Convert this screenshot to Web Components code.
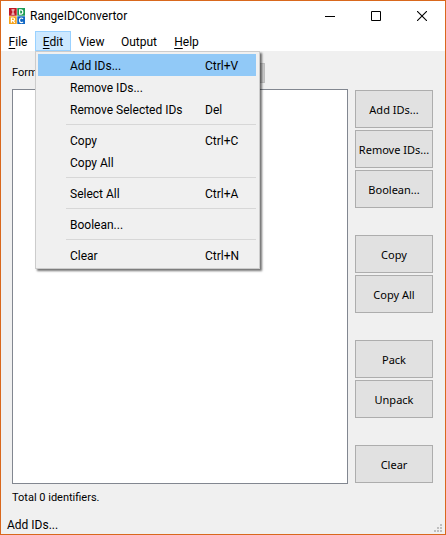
<!DOCTYPE html>
<html lang="en">
<head>
<meta charset="utf-8">
<title>RangeIDConvertor</title>
<style>
html, body { height: 100%; margin: 0; }
body { font-family: Roboto, "Noto Sans", sans-serif; font-size: 12px; line-height: 16px; color: #000; }
</style>
</head>
<body>
<app-window>
  <title-bar slot="title">RangeIDConvertor</title-bar>
  <menu-bar slot="menu">
    <menu-entry key="F">File</menu-entry>
    <menu-entry key="E" open>Edit
      <menu-popup slot="popup">
        <menu-item shortcut="Ctrl+V" active>Add IDs...</menu-item>
        <menu-item>Remove IDs...</menu-item>
        <menu-item shortcut="Del">Remove Selected IDs</menu-item>
        <menu-line></menu-line>
        <menu-item shortcut="Ctrl+C">Copy</menu-item>
        <menu-item>Copy All</menu-item>
        <menu-line></menu-line>
        <menu-item shortcut="Ctrl+A">Select All</menu-item>
        <menu-line></menu-line>
        <menu-item>Boolean...</menu-item>
        <menu-line></menu-line>
        <menu-item shortcut="Ctrl+N">Clear</menu-item>
      </menu-popup>
    </menu-entry>
    <menu-entry>View</menu-entry>
    <menu-entry>Output</menu-entry>
    <menu-entry key="H">Help</menu-entry>
  </menu-bar>
  <id-editor>
    <button-group slot="actions">
      <push-button>Add IDs...</push-button>
      <push-button>Remove IDs...</push-button>
      <push-button>Boolean...</push-button>
    </button-group>
    <button-group slot="actions">
      <push-button>Copy</push-button>
      <push-button>Copy All</push-button>
    </button-group>
    <button-group slot="actions">
      <push-button>Pack</push-button>
      <push-button>Unpack</push-button>
    </button-group>
    <button-group slot="actions">
      <push-button>Clear</push-button>
    </button-group>
    <span slot="total">Total 0 identifiers.</span>
  </id-editor>
  <status-bar slot="status">Add IDs...</status-bar>
</app-window>
<script>
function component(name, render) {
  customElements.define(name, class extends HTMLElement {
    constructor() {
      super();
      this.attachShadow({ mode: "open" });
    }
    connectedCallback() {
      this.shadowRoot.innerHTML = render(this);
    }
  });
}

component("app-window", () => `
  <style>
    :host { display: flex; flex-direction: column; box-sizing: border-box; min-height: 100vh;
            border: 1px solid #d9681d; background: #f0f0f0; }
    main { flex: 1; display: flex; flex-direction: column; }
  </style>
  <slot name="title"></slot>
  <slot name="menu"></slot>
  <main><slot></slot></main>
  <slot name="status"></slot>`);

component("title-bar", () => `
  <style>
    :host { display: flex; align-items: center; height: 30px; padding-left: 8px; background: #fff; }
    h1 { flex: 1; margin: 0 0 0 5px; font: inherit; }
    button { width: 46px; height: 30px; padding: 0; border: 0; background: none; }
    svg { display: block; margin: 0 auto; }
    .logo { margin: 0; }
  </style>
  <svg class="logo" width="16" height="16" viewBox="0 0 16 16" aria-hidden="true">
    <rect width="8" height="8" fill="#c01722"/>
    <rect x="8" width="8" height="8" fill="#1d9c55"/>
    <rect y="8" width="8" height="8" fill="#f6a31c"/>
    <rect x="8" y="8" width="8" height="8" fill="#1268c4"/>
    <path d="M8 0v16M0 8h16" stroke="#fff" stroke-opacity=".55"/>
    <g fill="none" stroke="#fff" stroke-width="1.2">
      <path d="M2.5 1.8h3M4 1.8v4.4M2.5 6.2h3" stroke-opacity=".8"/>
      <path d="M10.6 1.8h1.4q1.8 0 1.8 2.2t-1.8 2.2h-1.4z"/>
      <path d="M2.4 14.8V10h1.8q1.4 0 1.4 1.3t-1.4 1.3H2.4M4 12.6l1.8 2.2"/>
      <path d="M14 10.8q-.6-.8-1.6-.8-1.9 0-1.9 2.3t1.9 2.4q1 0 1.6-.8"/>
    </g>
  </svg>
  <h1><slot></slot></h1>
  <button aria-label="Minimize"><svg width="10" height="10"><path d="M0 5.5h10" stroke="#000"/></svg></button>
  <button aria-label="Maximize"><svg width="10" height="10"><path d="M.5 .5h9v9h-9z" fill="none" stroke="#000"/></svg></button>
  <button aria-label="Close"><svg width="10" height="10"><path d="M0 0l10 10M10 0L0 10" stroke="#000" stroke-width="1.1"/></svg></button>`);

component("menu-bar", () => `
  <style>
    :host { display: block; background: #fff; }
    nav { display: grid; grid-template-columns: 34px 36px 41px 54px 41px; height: 20px; }
  </style>
  <nav aria-label="Menu"><slot></slot></nav>`);

component("menu-entry", el => {
  const label = el.firstChild.textContent.trim();
  const text = el.getAttribute("key") ? `<u>${label[0]}</u>${label.slice(1)}` : label;
  return `
  <style>
    :host { display: block; position: relative; }
    button { display: block; width: 100%; height: 20px; padding: 2px 0 0; border: 1px solid transparent;
             background: none; font: inherit; color: inherit; white-space: nowrap; }
    :host([open]) button { background: #cce8ff; border-color: #99d1ff; }
    u { text-underline-offset: 2px; text-decoration-skip-ink: none; }
  </style>
  <button aria-haspopup="menu" aria-expanded="${el.hasAttribute("open")}">${text}</button>
  <slot name="popup"></slot>`;
});

component("menu-popup", () => `
  <style>
    :host { position: absolute; z-index: 1; top: 100%; left: 0; box-sizing: border-box; width: 225px; padding: 2px;
            border: 1px solid #ccc; background: #f0f0f0; box-shadow: 2px 2px 2px rgba(0,0,0,.55); }
    div { padding-right: 1px; }
  </style>
  <div role="menu"><slot></slot></div>`);

component("menu-item", el => `
  <style>
    :host { display: block; }
    button { display: grid; grid-template-columns: 1fr 51px; align-items: center; width: 100%; height: 22px;
             padding: 2px 0 0 32px; border: 0; background: none; font: inherit; color: inherit;
             text-align: left; white-space: nowrap; }
    :host([active]) button { background: #91c9f7; }
  </style>
  <button role="menuitem"><span><slot></slot></span><span>${el.getAttribute("shortcut") || ""}</span></button>`);

component("menu-line", () => `
  <style>
    :host { display: block; padding: 4px 0 4px 28px; }
    hr { margin: 0; border: 0; height: 1px; background: #d7d7d7; }
  </style>
  <hr>`);

component("id-editor", () => `
  <style>
    :host { flex: 1; display: grid; grid-template: 38px 1fr 26px / 1fr 78px; column-gap: 7px;
            padding: 0 12px 0 11px; font-size: 11px; }
    .format { grid-column: 1 / 3; display: grid; grid-template-columns: 43px 210px; align-items: center; padding-top: 6px; }
    select { width: 100%; height: 20px; margin: 0; border: 1px solid #bfbfbf; background: #ccc; font: inherit; appearance: none; }
    textarea { box-sizing: border-box; width: 100%; height: 100%; margin: 0; padding: 4px; resize: none;
               border: 1px solid #828790; background: #fff; font: inherit; display: block; }
    .actions { display: flex; flex-direction: column; justify-content: space-between; padding: 1px 0; }
    .total { align-self: center; padding-top: 2px; }
  </style>
  <div class="format"><label for="format">Format:</label><select id="format"></select></div>
  <textarea aria-label="Identifiers"></textarea>
  <div class="actions"><slot name="actions"></slot></div>
  <div class="total"><slot name="total"></slot></div>`);

component("button-group", () => `
  <style>:host { display: flex; flex-direction: column; gap: 2px; }</style>
  <slot></slot>`);

component("push-button", () => `
  <style>
    :host { display: block; font-family: "Noto Sans", sans-serif; }
    button { width: 100%; height: 38px; padding: 2px 0 0; border: 1px solid #adadad; background: #e1e1e1;
             font: inherit; color: inherit; white-space: nowrap; }
  </style>
  <button><slot></slot></button>`);

component("status-bar", () => `
  <style>
    :host { display: flex; justify-content: space-between; align-items: flex-end; box-sizing: border-box;
            height: 24px; padding: 0 3px 1px 6px; }
    svg { margin-bottom: 1px; }
  </style>
  <span role="status"><slot></slot></span>
  <svg width="8" height="8" fill="#bfbfbf" aria-hidden="true">
    <path d="M6 0h2v2h-2zM3 3h2v2h-2zM6 3h2v2h-2zM0 6h2v2h-2zM3 6h2v2h-2zM6 6h2v2h-2z"/>
  </svg>`);
</script>
</body>
</html>
